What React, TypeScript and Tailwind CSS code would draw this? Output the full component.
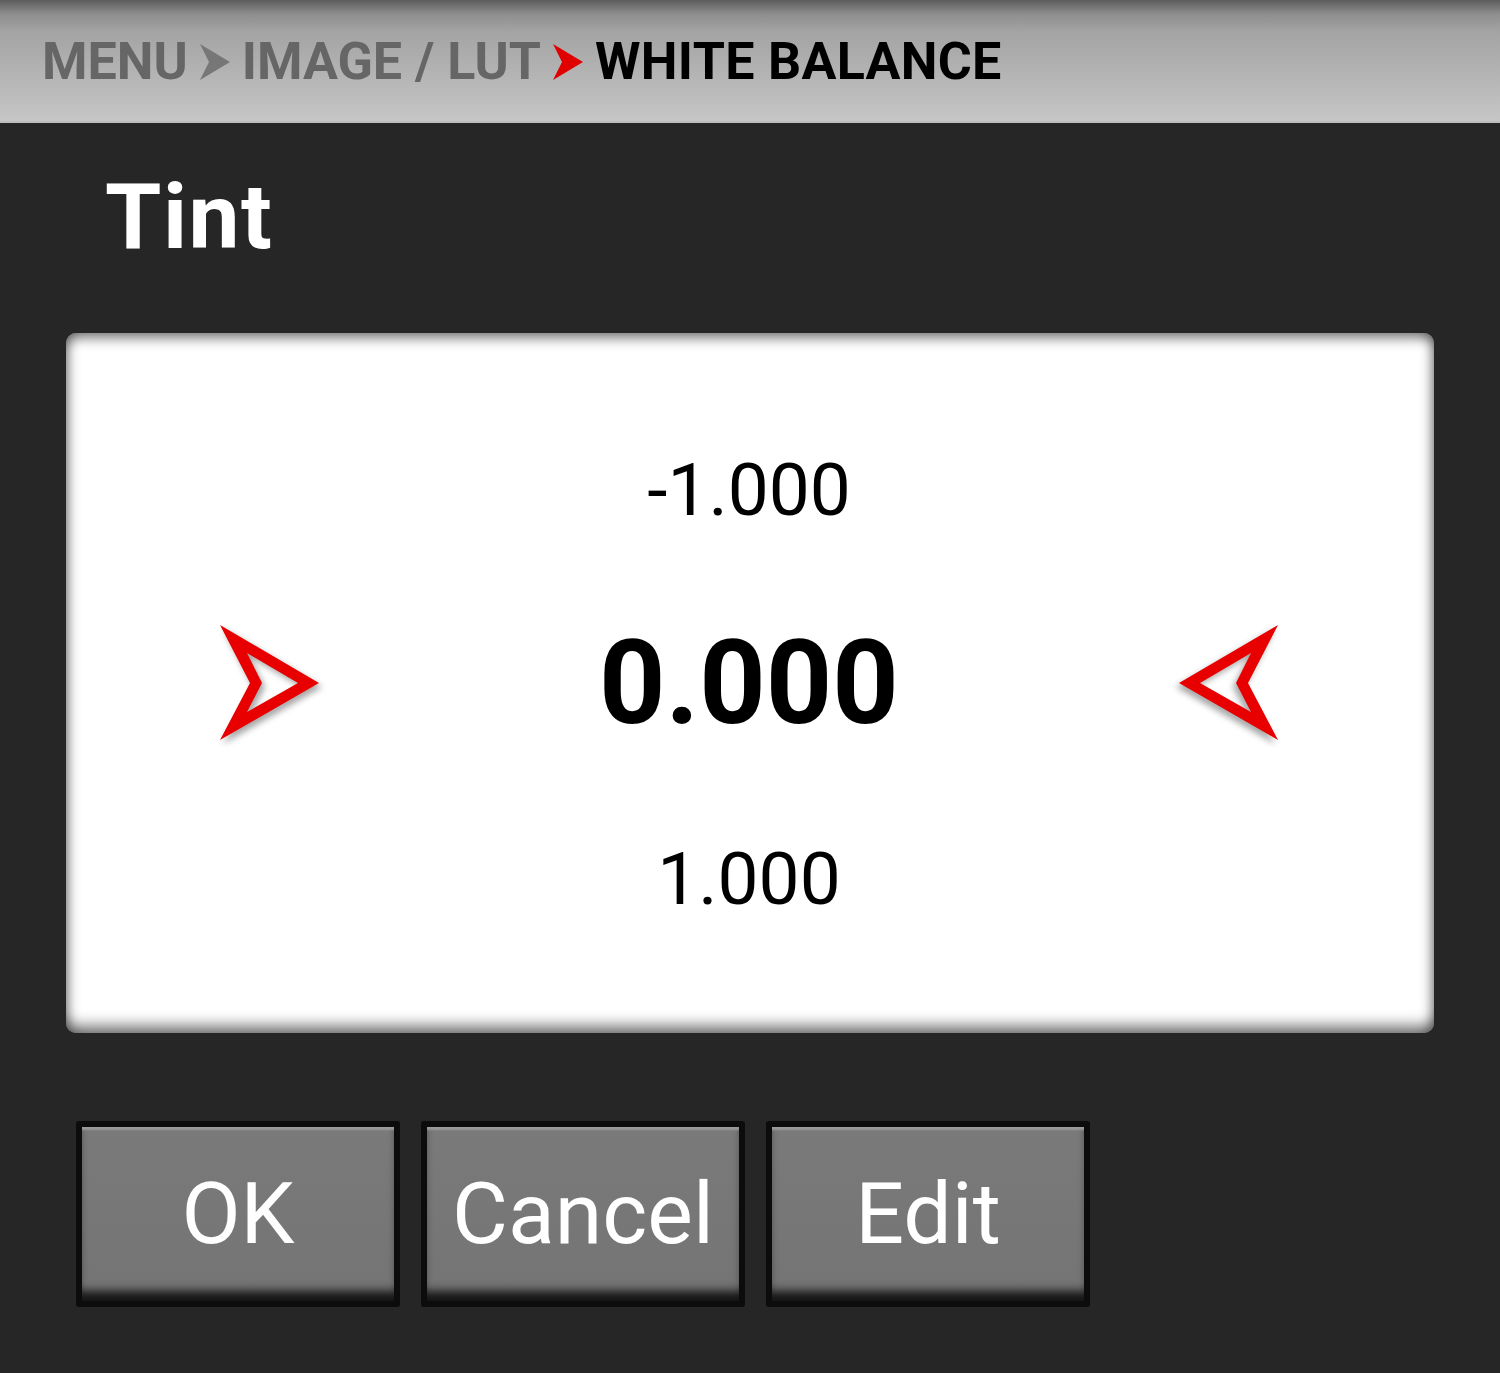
const ROBOTO = "font-['Roboto',_'Liberation_Sans',_sans-serif]";

function Arrow({ flip = false }: { flip?: boolean }) {
  return (
    <svg
      width="104"
      height="122"
      viewBox="0 0 104 122"
      className={`drop-shadow-[3px_4px_3px_rgba(0,0,0,0.35)] ${flip ? "-scale-x-100" : ""}`}
    >
      <path
        d="M2 3 L101 61 L2 118 L32 61 Z M29 31 L80 61 L29 90 L44 61 Z"
        fill="#e80000"
        fillRule="evenodd"
      />
    </svg>
  );
}

function Crumb({ red = false }: { red?: boolean }) {
  return (
    <svg width="34" height="40" viewBox="0 0 34 40" className="mx-[10px]">
      <path d="M2 2 L32 20 L2 38 L11 20 Z" fill={red ? "#e00000" : "#777777"} />
    </svg>
  );
}

function Button({ label }: { label: string }) {
  return (
    <div className="w-[324px] h-[186px] bg-[#0c0c0c] rounded-[3px] p-[6px]">
      <div className="h-full flex items-center justify-center bg-gradient-to-b from-[#7a7a7a] to-[#747474] shadow-[inset_0_5px_2px_-2px_#9a9a9a,inset_0_-14px_10px_-4px_#151515]">
        <span className="text-white text-[86px] leading-none">{label}</span>
      </div>
    </div>
  );
}

export default function App() {
  return (
    <div className={`w-[1500px] h-[1373px] bg-[#262626] ${ROBOTO}`}>
      <header className="h-[123px] flex items-center pl-[42px] pt-[2px] bg-[linear-gradient(to_bottom,#5c5c5c_0px,#8e8e8e_14px,#a4a4a4_32px,#b6b6b6_80px,#c6c6c6_121px)] border-b-2 border-[#bdbdbd]">
        <span className="text-[#666666] font-bold text-[52px] leading-none">MENU</span>
        <Crumb />
        <span className="text-[#666666] font-bold text-[52px] leading-none">IMAGE / LUT</span>
        <Crumb red />
        <span className="text-black font-bold text-[52px] tracking-[0.3px] leading-none">WHITE BALANCE</span>
      </header>

      <h1 className="pl-[105px] pt-[49px] h-[210px] text-white font-bold text-[91px] leading-none tracking-[1.5px]">
        Tint
      </h1>

      <div className="mx-[66px] h-[700px] bg-white rounded-[10px] shadow-[inset_0_10px_12px_-4px_rgba(0,0,0,0.45),inset_10px_0_12px_-6px_rgba(0,0,0,0.3),inset_-10px_0_12px_-6px_rgba(0,0,0,0.3),inset_0_-14px_14px_-6px_rgba(0,0,0,0.5)] flex items-center">
        <div className="pl-[152px]">
          <Arrow />
        </div>
        <div className="flex-1 flex flex-col items-center pt-[4px] text-black">
          <span className="text-[73px] leading-none">-1.000</span>
          <span className="mt-[98px] font-bold text-[116px] leading-none">0.000</span>
          <span className="mt-[102px] text-[73px] leading-none">1.000</span>
        </div>
        <div className="pr-[154px]">
          <Arrow flip />
        </div>
      </div>

      <div className="flex gap-[21px] pl-[76px] mt-[88px]">
        <Button label="OK" />
        <Button label="Cancel" />
        <Button label="Edit" />
      </div>
    </div>
  );
}
